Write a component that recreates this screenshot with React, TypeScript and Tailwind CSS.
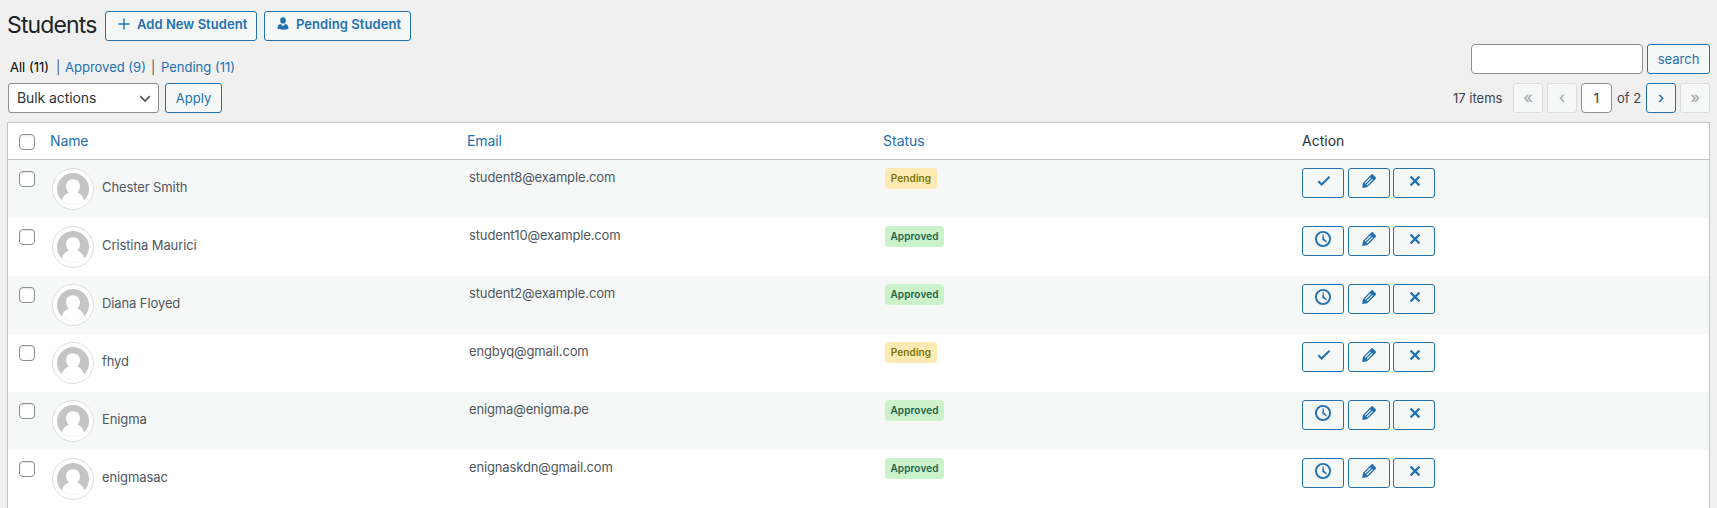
import type { ReactNode } from 'react';

type Status = 'Pending' | 'Approved';

const students: { name: string; email: string; status: Status }[] = [
  { name: 'Chester Smith', email: 'student8@example.com', status: 'Pending' },
  { name: 'Cristina Maurici', email: 'student10@example.com', status: 'Approved' },
  { name: 'Diana Floyed', email: 'student2@example.com', status: 'Approved' },
  { name: 'fhyd', email: 'engbyq@gmail.com', status: 'Pending' },
  { name: 'Enigma', email: 'enigma@enigma.pe', status: 'Approved' },
  { name: 'enigmasac', email: 'enignaskdn@gmail.com', status: 'Approved' },
];

function CheckIcon() {
  return (
    <svg className="ml-px mt-[-5px] size-5" viewBox="0 0 20 20" fill="none" stroke="currentColor" strokeWidth="2">
      <path d="M4.300 10.200l3.400 3.300 7.800-7.700" />
    </svg>
  );
}

function ClockIcon() {
  return (
    <svg className="mt-[-4px] size-5" viewBox="0 0 20 20" fill="none" stroke="currentColor">
      <circle cx="10" cy="10" r="7.100" strokeWidth="1.900" />
      <path d="M9.700 5h.7l.7 4.500 3 3.400-.6.500-4.300-2.700z" fill="currentColor" stroke="none" />
    </svg>
  );
}

function PencilIcon() {
  return (
    <svg className="mt-[-5px] ml-[-1px] size-5" viewBox="0 0 20 20" fill="currentColor">
      <path
        d="M13.900 3.400l2.800 2.800c.6.6.6 1.100.1 1.600l-1.100 1.200-7.500 7.300L3.100 17l.9-5.100 7.300-7.500 1.100-1c.5-.5 1-.5 1.500 0zM5.700 12l.8.8 5.500-5.500-.8-.8zM7.500 13.600l.8.8 5.600-5.600-.8-.8z"
        fillRule="evenodd"
      />
    </svg>
  );
}

function CrossIcon() {
  return (
    <svg className="mt-[-4px] ml-px size-5" viewBox="0 0 20 20" fill="none" stroke="currentColor" strokeWidth="2.200">
      <path d="M5.600 5.600l8.800 8.800M14.400 5.600l-8.800 8.800" />
    </svg>
  );
}

function Button({ className, children }: { className: string; children: ReactNode }) {
  return (
    <button className={`flex h-[30px] shrink-0 items-center rounded-[3px] border border-[#2271b1] bg-[#f6f7f7] text-[#2271b1] ${className}`}>
      {children}
    </button>
  );
}

function PageButton({ className, children }: { className: string; children: ReactNode }) {
  return (
    <button className={`flex size-[30px] shrink-0 justify-center rounded-[3px] border bg-[#f6f7f7] text-base leading-[26px] font-medium ${className}`}>
      {children}
    </button>
  );
}

function Checkbox() {
  return (
    <input
      type="checkbox"
      className="block size-4 appearance-none rounded-[4px] border border-[#8c8f94] bg-white shadow-[inset_0_1px_2px_rgba(0,0,0,0.1)]"
    />
  );
}

function Avatar() {
  return (
    <span className="flex size-[42px] items-center justify-center rounded-full border border-[#dcdfe4] bg-white">
      <svg className="size-8 rounded-full" viewBox="0 0 32 32">
        <rect width="32" height="32" fill="#c5c5c5" />
        <path
          d="M16 6.200c4.300 0 7 3.100 7 7 0 2.500-1.100 4.900-2.900 6.200 3.700 1.200 6.100 4.200 7.400 8.600V32h-23v-4c1.300-4.400 3.700-7.400 7.400-8.600C10.100 18.100 9 15.700 9 13.200c0-3.900 2.700-7 7-7z"
          fill="#fff"
        />
      </svg>
    </span>
  );
}

function Badge({ status }: { status: Status }) {
  const look = status === 'Pending' ? 'w-[52px] bg-[#ffeab3] text-[#757500]' : 'w-[59px] bg-[#ccf2cc] text-[#1c6148]';
  return (
    <span className={`flex h-[21px] items-center justify-center rounded-[4px] pb-px text-[10px] leading-none font-semibold tracking-[0.1px] ${look}`}>
      {status}
    </span>
  );
}

const columns = 'grid grid-cols-[41px_419px_417px_417px_1fr]';

export default function App() {
  return (
    <main className="h-[508px] overflow-hidden bg-[#f0f0f1] px-[7px] font-['Inter',sans-serif] text-[13px] leading-5 text-[#3c434a]">
      <header className="flex h-[41px] items-end">
        <h1 className="w-[98px] text-[23px] leading-[31px] tracking-[-0.85px] whitespace-nowrap text-[#1d2327]">Students</h1>
        <Button className="w-[152px] pb-1 pl-[8px] font-semibold">
          <svg className="size-5" viewBox="0 0 20 20" fill="none" stroke="currentColor" strokeWidth="1.500">
            <path d="M10 4.500v11M4.500 10h11" />
          </svg>
          <span className="ml-[3px] tracking-[0.04px] whitespace-nowrap">Add New Student</span>
        </Button>
        <Button className="ml-[7px] w-[147px] pb-1 pl-[8px] font-semibold">
          <svg className="size-5" viewBox="0 0 20 20" fill="currentColor">
            <ellipse cx="10" cy="6.400" rx="2.800" ry="3.200" />
            <path d="M4.500 14.500c0-2.700.9-4.300 3.200-4.600L10 12.300l2.300-2.400c2.300.3 3.200 1.900 3.200 4.600-1.500 1.600-9.500 1.600-11 0z" />
          </svg>
          <span className="ml-[3px] tracking-[0.06px] whitespace-nowrap">Pending Student</span>
        </Button>
      </header>

      <div className="flex h-[72px] justify-between">
        <div className="flex flex-col pl-px">
          <nav className="mt-4 flex h-[26px] items-start pl-[2px] whitespace-nowrap text-[#2271b1]">
            <span className="w-[46px] text-black">All (11)</span>
            <span className="w-[9px] text-[#50575e]">|</span>
            <a className="w-[86px]">Approved (9)</a>
            <span className="w-[10px] text-[#50575e]">|</span>
            <a>Pending (11)</a>
          </nav>
          <div className="flex">
            <div className="flex h-[30px] w-[151px] items-center justify-between rounded-[3px] border border-[#8c8f94] bg-white pr-[7px] pl-2 text-sm text-[#2c3338]">
              <span className="tracking-[-0.08px]">Bulk actions</span>
              <svg className="mt-0.5 size-3" viewBox="0 0 12 12" fill="none" stroke="#555" strokeWidth="1.700">
                <path d="M1.200 3.200L6 8l4.800-4.800" />
              </svg>
            </div>
            <Button className="ml-1.5 w-[57px] justify-center">Apply</Button>
          </div>
        </div>
        <div className="flex flex-col items-end pt-[3px]">
          <div className="flex gap-1">
            <input className="h-[30px] w-[172px] rounded-[4px] border border-[#8c8f94] bg-white" />
            <Button className="w-[63px] justify-center">search</Button>
          </div>
          <div className="mt-[9px] flex items-center">
            <span className="w-[60px] whitespace-nowrap">17 items</span>
            <PageButton className="border-[#dcdcde] text-[#a7aaad]">«</PageButton>
            <PageButton className="ml-1 border-[#dcdcde] text-[#a7aaad]">‹</PageButton>
            <span className="ml-1 flex h-[30px] w-[31px] items-center justify-center rounded-[4px] border border-[#8c8f94] bg-white text-[#2c3338]">1</span>
            <span className="w-[34px] pl-[5px] whitespace-nowrap">of 2</span>
            <PageButton className="border-[#2271b1] text-[#2271b1]">›</PageButton>
            <PageButton className="ml-1 border-[#dcdcde] text-[#a7aaad]">»</PageButton>
          </div>
        </div>
      </div>

      <section className="mt-[9px] h-[400px] border border-[#c3c4c7] bg-white">
        <div className={`${columns} h-[37px] items-center border-b border-[#c3c4c7] text-sm text-[#2271b1]`}>
          <span className="mt-px pl-[11px]"><Checkbox /></span>
          <span className="pl-px tracking-[-0.1px]">Name</span>
          <span className="-ml-px tracking-[-0.1px]">Email</span>
          <span className="-ml-0.5">Status</span>
          <span className="text-[#2c3338]">Action</span>
        </div>
        {students.map((s) => (
          <div key={s.email} className={`${columns} h-[58px] text-[#50575e] odd:bg-white even:bg-[#f6f7f7]`}>
            <div className="pt-[11px] pl-[11px]"><Checkbox /></div>
            <div className="flex pt-2 pl-[3px]">
              <Avatar />
              <span className="mt-[9px] ml-2 tracking-[-0.1px]">{s.name}</span>
            </div>
            <div className="pt-[7px] pl-px tracking-[-0.14px]">{s.email}</div>
            <div className="pt-2"><Badge status={s.status} /></div>
            <div className="flex pt-2">
              <Button className="w-[42px] justify-center">{s.status === 'Pending' ? <CheckIcon /> : <ClockIcon />}</Button>
              <Button className="ml-1 w-[42px] justify-center"><PencilIcon /></Button>
              <Button className="ml-[3px] w-[42px] justify-center"><CrossIcon /></Button>
            </div>
          </div>
        ))}
      </section>
    </main>
  );
}
